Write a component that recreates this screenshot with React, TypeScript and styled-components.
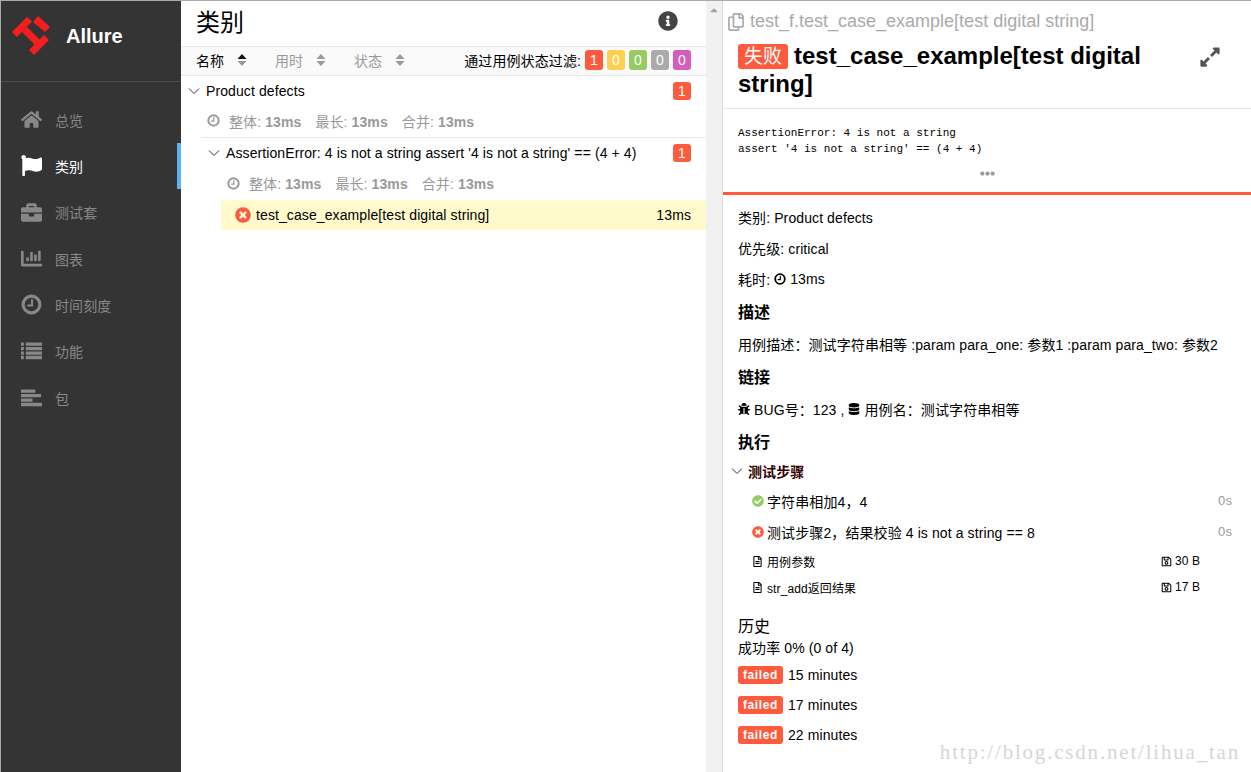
import styled, { createGlobalStyle } from 'styled-components';
import {
  FaHome,
  FaFlag,
  FaBriefcase,
  FaChartBar,
  FaInfoCircle,
  FaTimesCircle,
  FaCheckCircle,
  FaBug,
  FaDatabase,
  FaRegCopy,
  FaExpandAlt,
  FaEllipsisH,
  FaRegFileAlt,
  FaRegSave,
  FaCaretUp,
} from 'react-icons/fa';

const FONT = '"Liberation Sans", "Noto Sans CJK SC", sans-serif';
const RED = '#fd5a3e';

const GlobalStyle = createGlobalStyle`
  html, body {
    margin: 0;
    padding: 0;
    height: 100%;
    overflow: hidden;
    background: #fff;
    font-family: ${FONT};
    font-size: 14px;
    letter-spacing: 0.1px;
    color: #000;
  }
`;

const Page = styled.div`
  display: flex;
  width: 1251px;
  height: 772px;
  box-sizing: border-box;
  border-top: 1px solid #aaa;
  border-left: 1px solid #aaa;
  overflow: hidden;
  position: relative;
`;

const Sidebar = styled.aside`
  width: 180px;
  flex-shrink: 0;
  background: #343434;
  display: flex;
  flex-direction: column;
`;

const Brand = styled.div`
  display: flex;
  align-items: center;
  height: 70px;
  flex-shrink: 0;
  padding: 0 0 10px 7px;
  gap: 10px;
  border-bottom: 1px solid #4c4c4c;
  color: #fff;
  font-size: 20px;
  font-weight: 700;
  letter-spacing: 0;
`;

const Nav = styled.nav`
  display: flex;
  flex-direction: column;
  padding-top: 14.5px;
`;

const NavItem = styled.div<{ $active?: boolean }>`
  display: flex;
  align-items: center;
  height: 46.33px;
  padding-left: 20px;
  gap: 13px;
  box-sizing: border-box;
  color: ${p => (p.$active ? '#fff' : '#888')};
  border-right: 4px solid ${p => (p.$active ? '#5fb2f1' : 'transparent')};
  font-size: 14px;
`;

const NavIcon = styled.span`
  display: flex;
  width: 21px;
  justify-content: center;
  font-size: 21px;
`;

const TreePane = styled.section`
  width: 525px;
  flex-shrink: 0;
  display: flex;
  flex-direction: column;
`;

const PaneHeader = styled.header`
  display: flex;
  align-items: center;
  justify-content: space-between;
  height: 46px;
  padding: 0 28px 6px 15px;
  box-sizing: border-box;
  font-size: 24px;
  letter-spacing: 0;
  border-bottom: 1px solid #e8e8e8;
  color: #444;
`;

const PaneTitle = styled.span`
  color: #000;
`;

const SortRow = styled.div`
  display: flex;
  align-items: center;
  height: 29px;
  padding: 0 15px 2px;
  box-sizing: border-box;
  background: #fafafa;
  border-bottom: 1px solid #e8e8e8;
`;

const SortCol = styled.div<{ $active?: boolean; $width: number }>`
  display: flex;
  align-items: center;
  width: ${p => p.$width}px;
  gap: 13px;
  color: ${p => (p.$active ? '#000' : '#999')};
`;

const Filter = styled.div`
  display: flex;
  align-items: center;
  margin-left: auto;
  gap: 4px;
`;

const Count = styled.span<{ $color: string }>`
  display: inline-flex;
  align-items: center;
  justify-content: center;
  width: 18px;
  height: 20px;
  border-radius: 3px;
  background: ${p => p.$color};
  color: #fff;
  font-size: 14px;
`;

const Group = styled.div<{ $indent: number }>`
  display: flex;
  align-items: center;
  height: 30px;
  padding: 0 15px 0 ${p => p.$indent}px;
  gap: 6px;
`;

const GroupBadge = styled(Count)`
  margin-left: auto;
  height: 18px;
`;

const Stats = styled.div<{ $indent: number; $rule?: boolean }>`
  display: flex;
  align-items: center;
  height: 32px;
  box-sizing: border-box;
  margin-left: ${p => p.$indent}px;
  padding: 0 0 2px ${p => (p.$rule ? 6 : 0)}px;
  gap: 14px;
  color: #999;
  border-bottom: ${p => (p.$rule ? '1px solid #e8e8e8' : 'none')};
`;

const StatIcon = styled.span`
  display: flex;
  margin-right: -5px;
`;

const TestRow = styled.div`
  display: flex;
  align-items: center;
  justify-content: space-between;
  height: 30px;
  margin-left: 40px;
  padding: 0 15px 0 14px;
  background: #fff9cc;
`;

const TestName = styled.span`
  display: flex;
  align-items: center;
  gap: 5px;
`;

const ScrollTrack = styled.div`
  width: 17px;
  flex-shrink: 0;
  display: flex;
  justify-content: center;
  padding-top: 3px;
  box-sizing: border-box;
  background: #f1f1f1;
  color: #a3a3a3;
  font-size: 12px;
  border-right: 1px solid #dcdcdc;
`;

const Detail = styled.section`
  flex: 1;
  display: flex;
  flex-direction: column;
  min-width: 0;
`;

const DetailTop = styled.div`
  border-bottom: 1px solid #e8e8e8;
  height: 108px;
  box-sizing: border-box;
  letter-spacing: 0;
`;

const Breadcrumb = styled.div`
  display: flex;
  align-items: center;
  height: 41px;
  padding-left: 4px;
  gap: 5px;
  color: #aaa;
  font-size: 18px;
`;

const TitleRow = styled.div`
  display: flex;
  justify-content: space-between;
  padding: 0 30px 0 15px;
`;

const Title = styled.h2`
  margin: 0;
  width: 420px;
  font-size: 24px;
  line-height: 28px;
  font-weight: 700;
`;

const StatusChip = styled.span`
  display: inline-block;
  padding: 0 6px;
  margin-right: 6px;
  border-radius: 3px;
  background: ${RED};
  color: #fff;
  font-weight: 400;
  font-size: 19px;
  line-height: 25px;
  vertical-align: 1px;
`;

const ExpandIcon = styled.span`
  display: flex;
  color: #555;
  font-size: 22px;
  padding-top: 4px;
  height: 22px;
`;

const Message = styled.div`
  height: 86px;
  box-sizing: border-box;
  padding-top: 16px;
  border-bottom: 3px solid ${RED};
  color: #999;
`;

const Pre = styled.pre`
  margin: 0 0 0 15px;
  color: #000;
  font-family: "Liberation Mono", monospace;
  font-size: 11px;
  line-height: 16px;
  letter-spacing: 0;
`;

const Dots = styled.div`
  display: flex;
  justify-content: center;
  font-size: 15px;
  margin-top: 9px;
`;

const Body = styled.div`
  display: flex;
  flex-direction: column;
  padding-top: 6px;
  padding-left: 15px;
`;

const Line = styled.div`
  display: flex;
  align-items: center;
  height: 31px;
  white-space: pre;
`;

const SectionTitle = styled.h3`
  margin: 0;
  font-size: 16px;
  font-weight: 700;
  height: 34px;
  line-height: 37px;
`;

const StepsHead = styled.div`
  display: flex;
  align-items: center;
  height: 26px;
  margin-left: -7px;
  margin-bottom: 1px;
  gap: 5px;
  font-weight: 700;
  color: #300;
`;

const Step = styled.div`
  display: flex;
  align-items: center;
  height: 31px;
  padding: 0 19px 0 14px;
  gap: 3px;
`;

const Time = styled.span`
  margin-left: auto;
  color: #999;
  font-size: 13px;
`;

const Attachment = styled.div`
  display: flex;
  align-items: center;
  height: 26px;
  padding: 0 51px 0 14px;
  gap: 4px;
  font-size: 12px;

  ${Step} + & {
    margin-top: 1px;
  }
`;

const Size = styled.span`
  display: flex;
  align-items: center;
  gap: 3px;
  margin-left: auto;
`;

const History = styled.div`
  margin-top: 16px;
  display: flex;
  flex-direction: column;
`;

const HistoryTitle = styled(SectionTitle)`
  font-weight: 400;
  height: 20px;
  line-height: 22px;
`;

const Rate = styled.div`
  height: 24px;
  line-height: 24px;
`;

const HistoryRow = styled.div`
  display: flex;
  align-items: center;
  height: 30px;
  gap: 5px;
`;

const FailedTag = styled.span`
  padding: 0 5px;
  height: 18px;
  line-height: 19px;
  border-radius: 3px;
  background: ${RED};
  color: #fff;
  font-size: 12px;
  font-weight: 700;
  letter-spacing: 0.6px;
`;

const Watermark = styled.div`
  position: absolute;
  right: 11px;
  bottom: 7px;
  color: #d6d6d6;
  font-family: "Liberation Serif", serif;
  font-size: 21px;
  letter-spacing: 1.8px;
`;

function Logo() {
  return (
    <svg width="48" height="48" viewBox="0 0 48 48" fill="#f51e1e">
      <path d="M4 20 19 5l5 4.500L9 25z" />
      <path d="M14 20l5-5 14 14-5 5z" />
      <path d="M21 38 36 23l5 5-15 15z" />
      <path d="M25 10l5-6 12 11-5 5z" />
    </svg>
  );
}

function Chevron() {
  return (
    <svg width="12" height="8" viewBox="0 0 12 8" fill="none" stroke="#333" strokeWidth="1">
      <path d="M1 1.500 6 6.500 11 1.500" />
    </svg>
  );
}

function SortArrows({ active }: { active?: boolean }) {
  return (
    <svg width="10" height="12" viewBox="0 0 10 12">
      <path d="M5 0 9.500 5H.5z" fill={active ? '#111' : '#999'} />
      <path d="M5 12 .5 7h9z" fill="#999" />
    </svg>
  );
}

// the font awesome 5 regular clock is too thin for this picture
function Clock({ size }: { size: number }) {
  return (
    <svg width={size} height={size} viewBox="0 0 20 20" fill="none" stroke="currentColor">
      <circle cx="10" cy="10" r="8" strokeWidth="3" />
      <path d="M10.500 5v6H6" strokeWidth="2" />
    </svg>
  );
}

function ListGlyph() {
  return (
    <svg width="22" height="18" viewBox="0 0 22 18" fill="currentColor">
      <path d="M0 0h3v3.500H0zM5 0h17v3.500H5zM0 4.700h3v3.500H0zM5 4.700h17v3.500H5zM0 9.400h3v3.500H0zM5 9.400h17v3.500H5zM0 14.100h3v3.500H0zM5 14.100h17v3.500H5z" />
    </svg>
  );
}

function PackageGlyph() {
  return (
    <svg width="22" height="18" viewBox="0 0 22 18" fill="currentColor">
      <path d="M0 0h15v3.500H0zM0 4.700h21v3.500H0zM0 9.400h12v3.500H0zM0 14.100h22v3.500H0z" />
    </svg>
  );
}

const navItems = [
  { label: '总览', icon: <FaHome /> },
  { label: '类别', icon: <FaFlag />, active: true },
  { label: '测试套', icon: <FaBriefcase /> },
  { label: '图表', icon: <FaChartBar /> },
  { label: '时间刻度', icon: <Clock size={21} /> },
  { label: '功能', icon: <ListGlyph /> },
  { label: '包', icon: <PackageGlyph /> },
];

const counts = [
  { value: 1, color: RED },
  { value: 0, color: '#ffd050' },
  { value: 0, color: '#97cc64' },
  { value: 0, color: '#aaa' },
  { value: 0, color: '#d35ebe' },
];

function StatsLine({ indent, rule }: { indent: number; rule?: boolean }) {
  return (
    <Stats $indent={indent} $rule={rule}>
      <StatIcon><Clock size={13} /></StatIcon>
      <span>整体: <b>13ms</b></span>
      <span>最长: <b>13ms</b></span>
      <span>合并: <b>13ms</b></span>
    </Stats>
  );
}

export default function App() {
  return (
    <Page>
      <GlobalStyle />
      <Sidebar>
        <Brand>
          <Logo />
          <span>Allure</span>
        </Brand>
        <Nav>
          {navItems.map(item => (
            <NavItem key={item.label} $active={item.active}>
              <NavIcon>{item.icon}</NavIcon>
              <span>{item.label}</span>
            </NavItem>
          ))}
        </Nav>
      </Sidebar>

      <TreePane>
        <PaneHeader>
          <PaneTitle>类别</PaneTitle>
          <FaInfoCircle size={20} />
        </PaneHeader>
        <SortRow>
          <SortCol $active $width={79}>名称 <SortArrows active /></SortCol>
          <SortCol $width={79}>用时 <SortArrows /></SortCol>
          <SortCol $width={79}>状态 <SortArrows /></SortCol>
          <Filter>
            <span>通过用例状态过滤:</span>
            {counts.map((c, i) => (
              <Count key={i} $color={c.color}>{c.value}</Count>
            ))}
          </Filter>
        </SortRow>
        <Group $indent={7}>
          <Chevron />
          <span>Product defects</span>
          <GroupBadge $color={RED}>1</GroupBadge>
        </Group>
        <StatsLine indent={20} rule />
        <Group $indent={27}>
          <Chevron />
          <span>AssertionError: 4 is not a string assert '4 is not a string' == (4 + 4)</span>
          <GroupBadge $color={RED}>1</GroupBadge>
        </Group>
        <StatsLine indent={46} />
        <TestRow>
          <TestName>
            <FaTimesCircle size={16} color={RED} />
            test_case_example[test digital string]
          </TestName>
          <span>13ms</span>
        </TestRow>
      </TreePane>

      <ScrollTrack><FaCaretUp /></ScrollTrack>

      <Detail>
        <DetailTop>
          <Breadcrumb>
            <FaRegCopy size={18} />
            <span>test_f.test_case_example[test digital string]</span>
          </Breadcrumb>
          <TitleRow>
            <Title>
              <StatusChip>失败</StatusChip>
              test_case_example[test digital string]
            </Title>
            <ExpandIcon><FaExpandAlt /></ExpandIcon>
          </TitleRow>
        </DetailTop>
        <Message>
          <Pre>{"AssertionError: 4 is not a string\nassert '4 is not a string' == (4 + 4)"}</Pre>
          <Dots><FaEllipsisH /></Dots>
        </Message>
        <Body>
          <Line>类别: Product defects</Line>
          <Line>优先级: critical</Line>
          <Line>耗时: <Clock size={12} /> 13ms</Line>
          <SectionTitle>描述</SectionTitle>
          <Line>用例描述：测试字符串相等 :param para_one: 参数1 :param para_two: 参数2</Line>
          <SectionTitle>链接</SectionTitle>
          <Line><FaBug size={12} /> BUG号：123 , <FaDatabase size={12} /> 用例名：测试字符串相等</Line>
          <SectionTitle>执行</SectionTitle>
          <StepsHead><Chevron />测试步骤</StepsHead>
          <Step>
            <FaCheckCircle size={12} color="#97cc64" />
            字符串相加4，4
            <Time>0s</Time>
          </Step>
          <Step>
            <FaTimesCircle size={12} color={RED} />
            测试步骤2，结果校验 4 is not a string == 8
            <Time>0s</Time>
          </Step>
          <Attachment>
            <FaRegFileAlt size={11} />
            用例参数
            <Size><FaRegSave size={11} />30 B</Size>
          </Attachment>
          <Attachment>
            <FaRegFileAlt size={11} />
            str_add返回结果
            <Size><FaRegSave size={11} />17 B</Size>
          </Attachment>
          <History>
            <HistoryTitle>历史</HistoryTitle>
            <Rate>成功率 0% (0 of 4)</Rate>
            {['15 minutes', '17 minutes', '22 minutes'].map(t => (
              <HistoryRow key={t}>
                <FailedTag>failed</FailedTag>
                <span>{t}</span>
              </HistoryRow>
            ))}
          </History>
        </Body>
      </Detail>
      <Watermark>http://blog.csdn.net/lihua_tan</Watermark>
    </Page>
  );
}
